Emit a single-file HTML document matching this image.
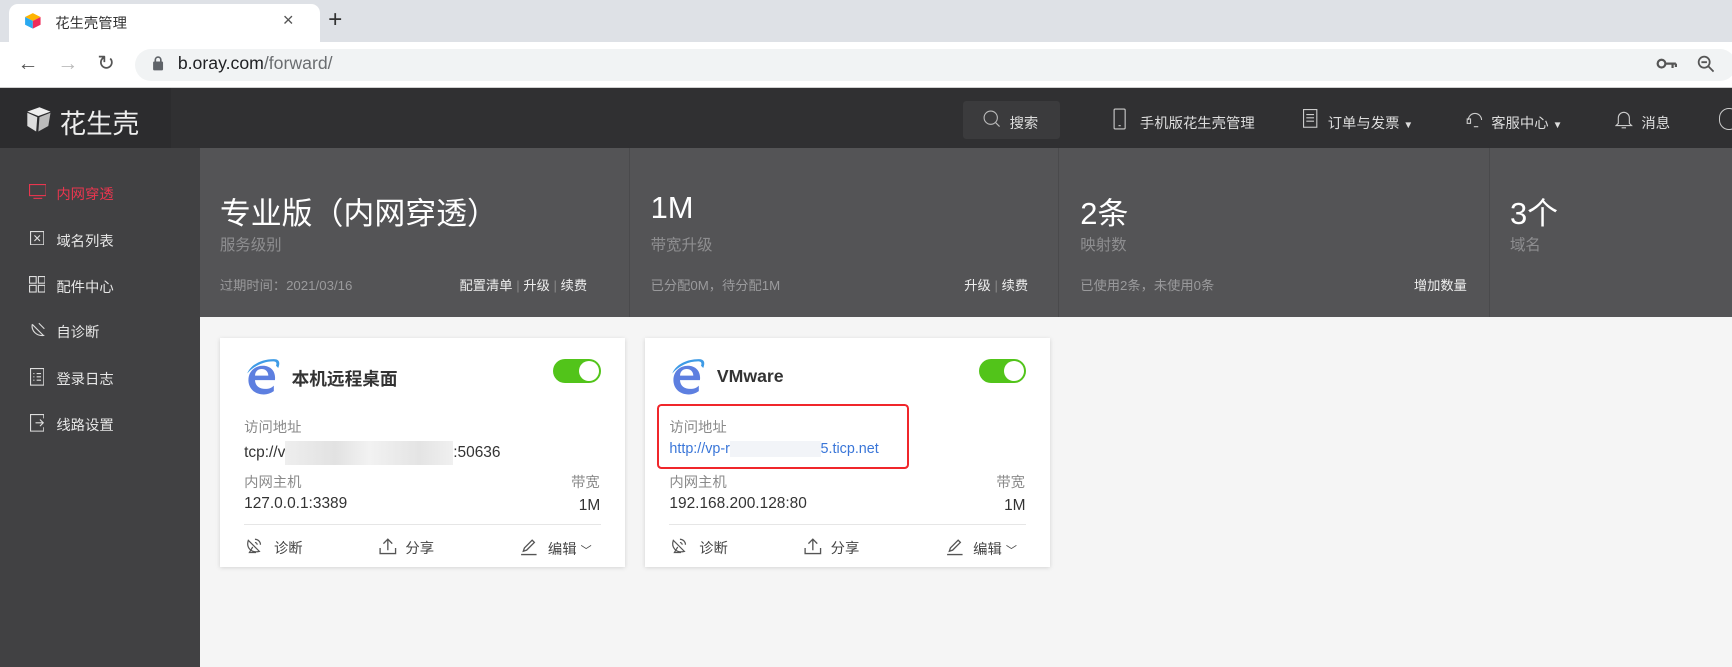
<!DOCTYPE html>
<html><head><meta charset="utf-8"><style>
*{margin:0;padding:0;box-sizing:border-box}
html,body{width:1732px;height:667px;overflow:hidden;background:#f5f5f5}
#w{position:absolute;left:0;top:0;width:1568px;height:604px;zoom:1.10459;font-family:"Liberation Sans","Noto Sans CJK SC",sans-serif;}
.a{position:absolute;white-space:nowrap}
.tabbar{left:0;top:0;width:1568px;height:38px;background:#dee1e6}
.tab{left:8px;top:4px;width:282px;height:34px;background:#fff;border-radius:8px 8px 0 0}
.addr{left:0;top:38px;width:1568px;height:42px;background:#fff;border-bottom:1px solid #d0d0d0}
.omni{left:122px;top:44px;width:1450px;height:29px;background:#f1f3f4;border-radius:15px}
.hdr{left:0;top:80px;width:1568px;height:54px;background:#303032}
.side{left:0;top:134px;width:181px;height:470px;background:#414143}
.stats{left:181px;top:134px;width:1387px;height:153px;background:#545456}
.col{top:134px;height:153px;border-left:1px solid #4a4a4c}
.big{font-size:28px;color:#fff}
.sub{font-size:14px;color:#8e8e90}
.ft{font-size:12px;color:#9a9a9c}
.lk{font-size:12px;color:#eee}
.nav{font-size:13px;color:#ddd}
.si{font-size:13px;color:#e6e6e6}
.card{width:367px;height:207px;top:306px;background:#fff;box-shadow:0 1px 4px rgba(0,0,0,.15)}
.lbl{font-size:13px;color:#8a8a8a}
.val{font-size:14px;color:#333}
.tg{width:43px;height:22px;border-radius:11px;background:#52c41a}
.tg:after{content:"";position:absolute;right:2px;top:2px;width:18px;height:18px;border-radius:50%;background:#fff}
.ti{font-size:16px;font-weight:bold;color:#333}
.fo{font-size:13px;color:#444}
</style></head><body><div id="w">
<div class="a tabbar"></div>
<div class="a tab"></div>
<svg class="a" style="left:22px;top:11px" width="16" height="16" viewBox="0 0 16 16"><path d="M8 1L15 4.5 8 8 1 4.5z" fill="#ffb400"/><path d="M1 4.5L8 8V15L1 11.5z" fill="#29a9f0"/><path d="M15 4.5L8 8V15L15 11.5z" fill="#ef2c5a"/></svg>
<div class="a" style="left:50px;top:11px;font-size:13px;color:#333">花生壳管理</div>
<div class="a" style="left:256px;top:8px;font-size:17px;color:#555">×</div>
<div class="a" style="left:297px;top:5px;font-size:22px;color:#333">+</div>
<div class="a addr"></div>
<div class="a" style="left:16px;top:47px;font-size:19px;color:#555">←</div>
<div class="a" style="left:52px;top:47px;font-size:19px;color:#bbb">→</div>
<div class="a" style="left:88px;top:46px;font-size:19px;color:#555">↻</div>
<div class="a omni"></div>
<svg class="a" style="left:138px;top:51px" width="11" height="13"><rect x="1" y="5" width="9" height="8" rx="1" fill="#5f6368"/><path d="M3 5V3.5a2.5 2.5 0 0 1 5 0V5" stroke="#5f6368" stroke-width="1.5" fill="none"/></svg>
<div class="a" style="left:161px;top:48px;font-size:16px;color:#202124">b.oray.com<span style="color:#6a6d70">/forward/</span></div>
<svg class="a" style="left:1499px;top:52px" width="20" height="12"><circle cx="5" cy="6" r="3.5" stroke="#555" stroke-width="2" fill="none"/><path d="M8.5 6H18M15 6v4M18 6v3" stroke="#555" stroke-width="2"/></svg>
<svg class="a" style="left:1536px;top:50px" width="16" height="16"><circle cx="6.5" cy="6.5" r="5" stroke="#555" stroke-width="1.6" fill="none"/><path d="M10 10l5 5M4 6.5h5" stroke="#555" stroke-width="1.6"/></svg>
<div class="a hdr"></div>
<div class="a" style="left:0;top:80px;width:155px;height:54px;background:#2c2c2e"></div>
<svg class="a" style="left:22px;top:95px" width="26" height="26" viewBox="0 0 26 26"><path d="M3 6L14 2 24 6 13 10z" fill="#eee"/><path d="M3 7L12 11 11 24 3 19z" fill="#ddd"/><path d="M24 7L14 11 13 24 22 19z" fill="#bbb"/></svg>
<div class="a" style="left:54px;top:92px;font-size:24px;color:#eee">花生壳</div>
<div class="a" style="left:872px;top:91px;width:88px;height:35px;background:#3b3b3d;border-radius:3px"></div>
<svg class="a" style="left:890px;top:100px" width="16" height="16"><circle cx="7" cy="7" r="6" stroke="#bbb" fill="none"/><path d="M11.5 11.5L15 15" stroke="#bbb"/></svg>
<div class="a nav" style="left:914px;top:101px">搜索</div>
<svg class="a" style="left:1008px;top:98px" width="12" height="20"><rect x="1" y="1" width="10" height="18" rx="1" stroke="#ccc" fill="none"/><path d="M5 16h2" stroke="#ccc"/></svg>
<div class="a nav" style="left:1032px;top:101px">手机版花生壳管理</div>
<svg class="a" style="left:1180px;top:99px" width="13" height="17"><rect x=".5" y=".5" width="12" height="16" stroke="#ccc" fill="none"/><path d="M3 5h7M3 8h7M3 11h7" stroke="#ccc"/></svg>
<div class="a nav" style="left:1202px;top:101px">订单与发票 <span style="font-size:9px">▼</span></div>
<svg class="a" style="left:1326px;top:99px" width="18" height="18"><path d="M3 10a6 6 0 0 1 12 0M8 16h4" stroke="#ccc" fill="none"/><rect x="2" y="9" width="3" height="4" fill="none" stroke="#ccc"/></svg>
<div class="a nav" style="left:1350px;top:101px">客服中心 <span style="font-size:9px">▼</span></div>
<svg class="a" style="left:1462px;top:99px" width="16" height="18"><path d="M3 13V8a5 5 0 0 1 10 0v5l2 2H1zM6 17h4" stroke="#ccc" fill="none"/></svg>
<div class="a nav" style="left:1486px;top:101px">消息</div>
<div class="a" style="left:1556px;top:98px;width:18px;height:20px;border:1px solid #ccc;border-radius:9px"></div>
<div class="a side"></div>
<div class="a stats"></div>
<div class="a col" style="left:569px"></div><div class="a col" style="left:958px"></div><div class="a col" style="left:1348px"></div>
<div class="a big" style="left:199px;top:170px">专业版（内网穿透）</div>
<div class="a sub" style="left:199px;top:211px">服务级别</div>
<div class="a ft" style="left:199px;top:249px">过期时间：2021/03/16</div>
<div class="a lk" style="left:416px;top:249px">配置清单 <span style="color:#888">|</span> 升级 <span style="color:#888">|</span> 续费</div>
<div class="a big" style="left:589px;top:172px">1M</div>
<div class="a sub" style="left:589px;top:211px">带宽升级</div>
<div class="a ft" style="left:589px;top:249px">已分配0M，待分配1M</div>
<div class="a lk" style="left:873px;top:249px">升级 <span style="color:#888">|</span> 续费</div>
<div class="a big" style="left:978px;top:170px">2条</div>
<div class="a sub" style="left:978px;top:211px">映射数</div>
<div class="a ft" style="left:978px;top:249px">已使用2条，未使用0条</div>
<div class="a lk" style="left:1280px;top:249px">增加数量</div>
<div class="a big" style="left:1367px;top:170px">3个</div>
<div class="a sub" style="left:1367px;top:211px">域名</div>
<svg class="a" style="left:26px;top:167px" width="16" height="14"><rect x=".5" y=".5" width="15" height="10" stroke="#e8364f" fill="none"/><path d="M4 13h8" stroke="#e8364f"/></svg>
<div class="a si" style="left:51px;top:166px;color:#e8364f">内网穿透</div>
<svg class="a" style="left:27px;top:209px" width="13" height="13"><rect x=".5" y=".5" width="12" height="12" stroke="#ddd" fill="none"/><path d="M4 4l5 5M9 4l-5 5" stroke="#ddd"/></svg>
<div class="a si" style="left:51px;top:208px">域名列表</div>
<svg class="a" style="left:26px;top:250px" width="15" height="15"><rect x=".5" y=".5" width="6" height="6" stroke="#ddd" fill="none"/><rect x="8.5" y=".5" width="6" height="6" stroke="#ddd" fill="none"/><rect x=".5" y="8.5" width="6" height="6" stroke="#ddd" fill="none"/><rect x="8.5" y="8.5" width="6" height="6" stroke="#ddd" fill="none"/></svg>
<div class="a si" style="left:51px;top:250px">配件中心</div>
<svg class="a" style="left:27px;top:291px" width="15" height="15"><path d="M2 3C1 9 6 14 13 13M2 3l10 10M8 2l5 5" stroke="#ddd" fill="none"/></svg>
<div class="a si" style="left:51px;top:291px">自诊断</div>
<svg class="a" style="left:27px;top:333px" width="13" height="16"><rect x=".5" y=".5" width="12" height="15" stroke="#ddd" fill="none"/><path d="M3 5h1M6 5h4M3 8h1M6 8h4M3 11h1M6 11h4" stroke="#ddd"/></svg>
<div class="a si" style="left:51px;top:333px">登录日志</div>
<svg class="a" style="left:27px;top:375px" width="13" height="16"><path d="M12.5 4V.5H.5v15h12V12M5 8h7M9 5l3 3-3 3" stroke="#ddd" fill="none"/></svg>
<div class="a si" style="left:51px;top:375px">线路设置</div>

<svg width="0" height="0" style="position:absolute"><defs>
<symbol id="ie" viewBox="0 0 34 34"><path d="M28 20H10c0 5 4 8 9 8 4 0 6-1 8-3v5c-3 2-6 3-9 3C9 33 4 27 4 20 4 12 10 7 17 7c8 0 12 6 11 13zM10 16h12c0-4-3-6-6-6s-6 2-6 6z" fill="#5d7fe0"/><path d="M3 14C6 6 16 1 27 1c5 0 6 3 4 8l-2-2c1-3 0-4-3-4C18 3 9 7 3 14z" fill="#3e9be6"/></symbol>
<symbol id="dg" viewBox="0 0 16 16"><path d="M3 3C1 9 5 15 13 13L3 3zM7 9l-3 5h6M9 2a5 5 0 0 1 5 5M9 5a2 2 0 0 1 2 2" stroke="#555" fill="none" stroke-width="1.1"/></symbol>
<symbol id="sh" viewBox="0 0 16 16"><path d="M8 12V2M4 6l4-4 4 4M1 10v5h14v-5" stroke="#555" fill="none" stroke-width="1.2"/></symbol>
<symbol id="ed" viewBox="0 0 16 16"><path d="M3 12l1-3 7-7 2 2-7 7zM1 15h14" stroke="#555" fill="none" stroke-width="1.2"/></symbol>
</defs></svg>

<div class="a card" style="left:199px"></div>
<svg class="a" style="left:221px;top:324px" width="34" height="34"><use href="#ie"/></svg>
<div class="a ti" style="left:264px;top:331px">本机远程桌面</div>
<div class="a tg" style="left:501px;top:325px"></div>
<div class="a lbl" style="left:221px;top:377px">访问地址</div>
<div class="a val" style="left:221px;top:399px">tcp://v<span style="display:inline-block;width:152px;height:22px;vertical-align:middle;background:linear-gradient(90deg,#eee,#e2e2e2 30%,#f2f2f2 50%,#e4e4e4 80%,#f0f0f0)"></span>:50636</div>
<div class="a lbl" style="left:221px;top:426px">内网主机</div>
<div class="a lbl" style="left:517px;top:426px">带宽</div>
<div class="a val" style="left:221px;top:448px">127.0.0.1:3389</div>
<div class="a val" style="left:524px;top:450px">1M</div>
<div class="a" style="left:221px;top:474px;width:323px;height:1px;background:#e6e6e6"></div>
<svg class="a" style="left:222px;top:486px" width="16" height="16"><use href="#dg"/></svg><div class="a fo" style="left:248px;top:486px">诊断</div>
<svg class="a" style="left:343px;top:486px" width="16" height="16"><use href="#sh"/></svg><div class="a fo" style="left:367px;top:486px">分享</div>
<svg class="a" style="left:471px;top:487px" width="16" height="16"><use href="#ed"/></svg><div class="a fo" style="left:496px;top:487px">编辑 <span style="font-size:10px">﹀</span></div>

<div class="a card" style="left:584px"></div>
<svg class="a" style="left:606px;top:324px" width="34" height="34"><use href="#ie"/></svg>
<div class="a ti" style="left:649px;top:331px">VMware</div>
<div class="a tg" style="left:886px;top:325px"></div>
<div class="a" style="left:595px;top:366px;width:228px;height:59px;border:2.5px solid #f0262b;border-radius:4px"></div>
<div class="a lbl" style="left:606px;top:377px">访问地址</div>
<div class="a val" style="left:606px;top:399px;color:#3a76d8;font-size:13px">http://vp-r<span style="display:inline-block;width:82px;height:14px;vertical-align:middle;background:#f2f4f8"></span>5.ticp.net</div>
<div class="a lbl" style="left:606px;top:426px">内网主机</div>
<div class="a lbl" style="left:902px;top:426px">带宽</div>
<div class="a val" style="left:606px;top:448px">192.168.200.128:80</div>
<div class="a val" style="left:909px;top:450px">1M</div>
<div class="a" style="left:606px;top:474px;width:323px;height:1px;background:#e6e6e6"></div>
<svg class="a" style="left:607px;top:486px" width="16" height="16"><use href="#dg"/></svg><div class="a fo" style="left:633px;top:486px">诊断</div>
<svg class="a" style="left:728px;top:486px" width="16" height="16"><use href="#sh"/></svg><div class="a fo" style="left:752px;top:486px">分享</div>
<svg class="a" style="left:856px;top:487px" width="16" height="16"><use href="#ed"/></svg><div class="a fo" style="left:881px;top:487px">编辑 <span style="font-size:10px">﹀</span></div>
</div></body></html>
